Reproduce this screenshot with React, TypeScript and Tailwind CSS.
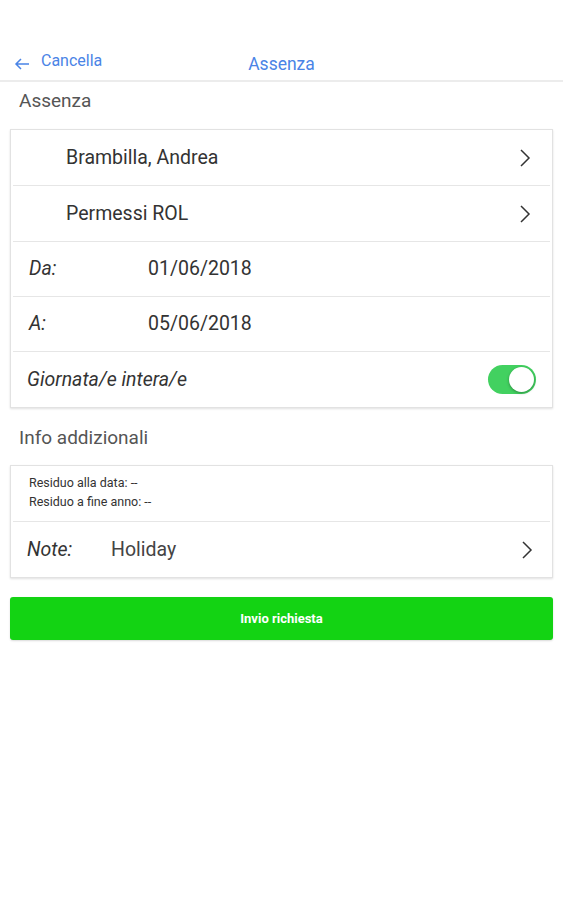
const rowBase = 'flex items-center h-[55px] border-b border-[#e6e6e6] mx-[2px]';

const Chevron = () => (
  <svg width="14" height="22" viewBox="0 0 14 22" className="shrink-0">
    <path d="M3 3 L11 11 L3 19" fill="none" stroke="#333" strokeWidth="1.5" />
  </svg>
);

const Toggle = ({ on }: { on: boolean }) => (
  <div
    className={`relative w-[48px] h-[29px] rounded-full ${on ? 'bg-[#42d160]' : 'bg-[#ddd]'}`}
  >
    <div
      className={`absolute top-[2px] w-[25px] h-[25px] rounded-full bg-white shadow-[0_1px_3px_rgba(0,0,0,0.35)] ${
        on ? 'right-[2px]' : 'left-[2px]'
      }`}
    />
  </div>
);

const App = () => {
  return (
    <div className="min-h-screen w-[563px] bg-white font-['Roboto','Liberation_Sans',sans-serif] text-[#333]">
      {/* header */}
      <div className="flex items-end h-[82px] border-b-2 border-[#ececec] relative pb-[7px]">
        <button type="button" className="flex items-center pl-[14px] text-[#4a84e6]">
          <svg width="16" height="14" viewBox="0 0 16 14" className="mt-[2px]">
            <path d="M15 7 H2 M7 2 L2 7 L7 12" fill="none" stroke="#4a84e6" strokeWidth="1.5" />
          </svg>
          <span className="ml-[11px] text-[16px] leading-[20px] -translate-y-[2px]">Cancella</span>
        </button>
        <div className="absolute left-0 right-0 bottom-[6px] text-center text-[17.5px] leading-[20px] text-[#4a84e6] pointer-events-none">
          Assenza
        </div>
      </div>

      <div className="px-[19px] pt-[9px] pb-[18px] text-[19px] leading-[20px] text-[#555]">Assenza</div>

      <div className="mx-[10px] border border-[#e2e2e2] shadow-[0_1px_2px_rgba(0,0,0,0.12)] bg-white">
        <div className={`${rowBase} h-[56px] pl-[53px] pr-[18px] justify-between`}>
          <span className="text-[19.5px]">Brambilla, Andrea</span>
          <Chevron />
        </div>
        <div className={`${rowBase} h-[56px] pl-[53px] pr-[18px] justify-between`}>
          <span className="text-[19.5px]">Permessi ROL</span>
          <Chevron />
        </div>
        <div className={`${rowBase} pl-[16px]`}>
          <span className="w-[119px] text-[19.5px] italic">Da:</span>
          <span className="text-[19.5px]">01/06/2018</span>
        </div>
        <div className={`${rowBase} pl-[16px]`}>
          <span className="w-[119px] text-[19.5px] italic">A:</span>
          <span className="text-[19.5px]">05/06/2018</span>
        </div>
        <div className="flex items-center h-[55px] pl-[16px] pr-[16px] justify-between">
          <span className="text-[19.5px] italic">Giornata/e intera/e</span>
          <Toggle on />
        </div>
      </div>

      <div className="px-[19px] pt-[20px] pb-[17px] text-[19px] leading-[20px] text-[#555]">
        Info addizionali
      </div>

      <div className="mx-[10px] border border-[#e2e2e2] shadow-[0_1px_2px_rgba(0,0,0,0.12)] bg-white">
        <div className="flex flex-col justify-start h-[56px] pt-[7px] pl-[16px] mx-[2px] border-b border-[#e6e6e6] text-[12.5px] leading-[19px] text-[#333]">
          <span>Residuo alla data: --</span>
          <span>Residuo a fine anno: --</span>
        </div>
        <div className="flex items-center h-[55px] pl-[16px] pr-[18px]">
          <span className="w-[84px] text-[19.5px] italic">Note:</span>
          <span className="flex-1 text-[19.5px] text-[#444]">Holiday</span>
          <Chevron />
        </div>
      </div>

      <button
        type="button"
        className="mt-[19px] mx-[10px] w-[543px] h-[43px] rounded-[3px] bg-[#13d313] text-white text-[13px] font-bold shadow-[0_1px_2px_rgba(0,0,0,0.15)]"
      >
        Invio richiesta
      </button>
    </div>
  );
};

export default App;
